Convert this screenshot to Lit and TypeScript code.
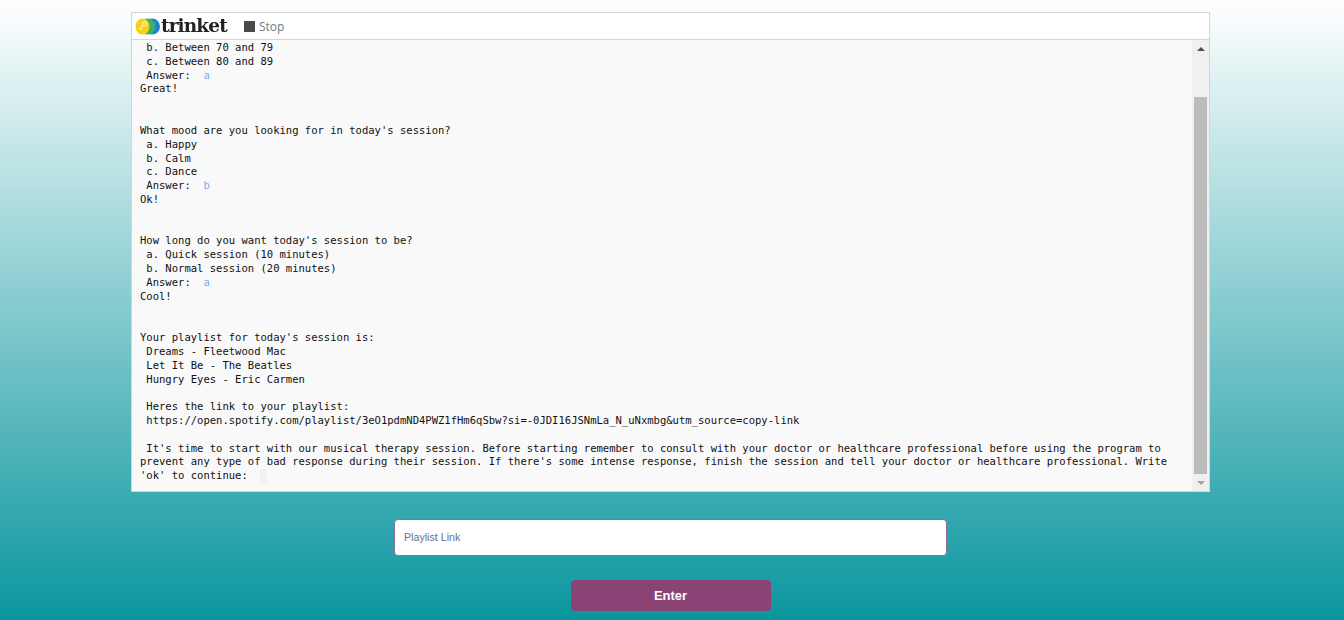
import { LitElement, html, css } from "lit";
import { customElement } from "lit/decorators.js";

const A = (s: string) => html`<span class="in">${s}</span>`;

@customElement("app-root")
export class AppRoot extends LitElement {
  static styles = css`
    :host { display: block; height: 620px; overflow: hidden;
      background: linear-gradient(180deg, #ffffff 0%, #0a969e 100%);
      padding-top: 12px; box-sizing: border-box; font-family: "Liberation Sans", Arial, sans-serif; }
    .frame { width: 1079px; height: 480px; margin-left: 131px; box-sizing: border-box;
      border: 1px solid #d3d6d6; background: #f9f9f9; display: flex; flex-direction: column; }
    .head { height: 26px; background: #fff; border-bottom: 1px solid #d3d6d6; display: flex; align-items: center; flex: none; }
    .logo { margin-left: 3px; flex: none; display: block; filter: blur(0.35px); }
    .brand { font: bold 18.5px "DejaVu Serif", serif; color: #222; letter-spacing: -0.85px; line-height: 26px; filter: blur(0.3px); }
    .stop { display: flex; align-items: center; margin-left: 17px; color: #6d7a82; font: 12px "Open Sans", sans-serif; gap: 4px; }
    .sq { width: 11px; height: 11px; background: #4a4a4a; }
    .body { flex: 1; display: flex; min-height: 0; }
    pre { flex: 1; margin: 0; padding: 1px 0 0 8px; overflow: hidden;
      font: 10.54px/13.82px "DejaVu Sans Mono", monospace; color: #111; }
    .in { color: #6fb1f5; }
    .cursor { display: inline-block; width: 7px; height: 14px; background: #f1f1f1; vertical-align: top; }
    .bar { width: 17px; background: #f0f0f0; display: flex; flex-direction: column; align-items: center; flex: none; }
    .arrow { height: 17px; flex: none; display: flex; align-items: center; justify-content: center; width: 100%; }
    .track { flex: 1; width: 100%; padding: 40px 2px 0 2px; box-sizing: border-box; display: flex; }
    .thumb { flex: 1; background: #bcbcbc; }
    .form { display: flex; flex-direction: column; align-items: center; margin-left: -3px; }
    .input { width: 553px; height: 37px; margin-top: 27px; box-sizing: border-box; background: #fff;
      border: 1px solid #8f6f99; border-radius: 4px; padding: 0 0 2px 9px; display: flex; align-items: center;
      font-size: 10.67px; color: #6b7280; }
    .btn { width: 200px; height: 31px; margin-top: 24px; background: #8a4374; border-radius: 4px; color: #fff;
      font-weight: bold; font-size: 13px; display: flex; align-items: center; justify-content: center; }
  `;

  render() {
    return html`
      <div class="frame">
        <div class="head">
          <svg class="logo" width="26" height="17" viewBox="0 0 26 17">
            <ellipse cx="17" cy="8.5" rx="8" ry="8" fill="#1f7fd6"/>
            <ellipse cx="12.5" cy="8.5" rx="8" ry="8" fill="#35b36a"/>
            <ellipse cx="7.5" cy="8.5" rx="7" ry="8" fill="#f7d117"/>
            <circle cx="9.5" cy="6" r="2" fill="none" stroke="#fff09a" stroke-width="1.3"/>
            <path d="M8 7.5 L4 11.5 M5.5 10 L7 11.5" stroke="#fff09a" stroke-width="1.3" fill="none"/>
          </svg>
          <span class="brand">trinket</span>
          <span class="stop"><span class="sq"></span>Stop</span>
        </div>
        <div class="body">
          <pre> b. Between 70 and 79
 c. Between 80 and 89
 Answer:  ${A("a")}
Great!


What mood are you looking for in today's session?
 a. Happy
 b. Calm
 c. Dance
 Answer:  ${A("b")}
Ok!


How long do you want today's session to be?
 a. Quick session (10 minutes)
 b. Normal session (20 minutes)
 Answer:  ${A("a")}
Cool!


Your playlist for today's session is:
 Dreams - Fleetwood Mac
 Let It Be - The Beatles
 Hungry Eyes - Eric Carmen

 Heres the link to your playlist:
 https://open.spotify.com/playlist/3eO1pdmND4PWZ1fHm6qSbw?si=-0JDI16JSNmLa_N_uNxmbg&utm_source=copy-link

 It's time to start with our musical therapy session. Before starting remember to consult with your doctor or healthcare professional before using the program to
prevent any type of bad response during their session. If there's some intense response, finish the session and tell your doctor or healthcare professional. Write
'ok' to continue:  <span class="cursor"></span></pre>
          <div class="bar">
            <div class="arrow"><svg width="8" height="4" viewBox="0 0 8 4"><path d="M4 0 L8 4 L0 4 Z" fill="#505050"/></svg></div>
            <div class="track"><div class="thumb"></div></div>
            <div class="arrow"><svg width="8" height="4" viewBox="0 0 8 4"><path d="M0 0 L8 0 L4 4 Z" fill="#a3a3a3"/></svg></div>
          </div>
        </div>
      </div>
      <div class="form">
        <div class="input">Playlist Link</div>
        <div class="btn">Enter</div>
      </div>
    `;
  }
}
